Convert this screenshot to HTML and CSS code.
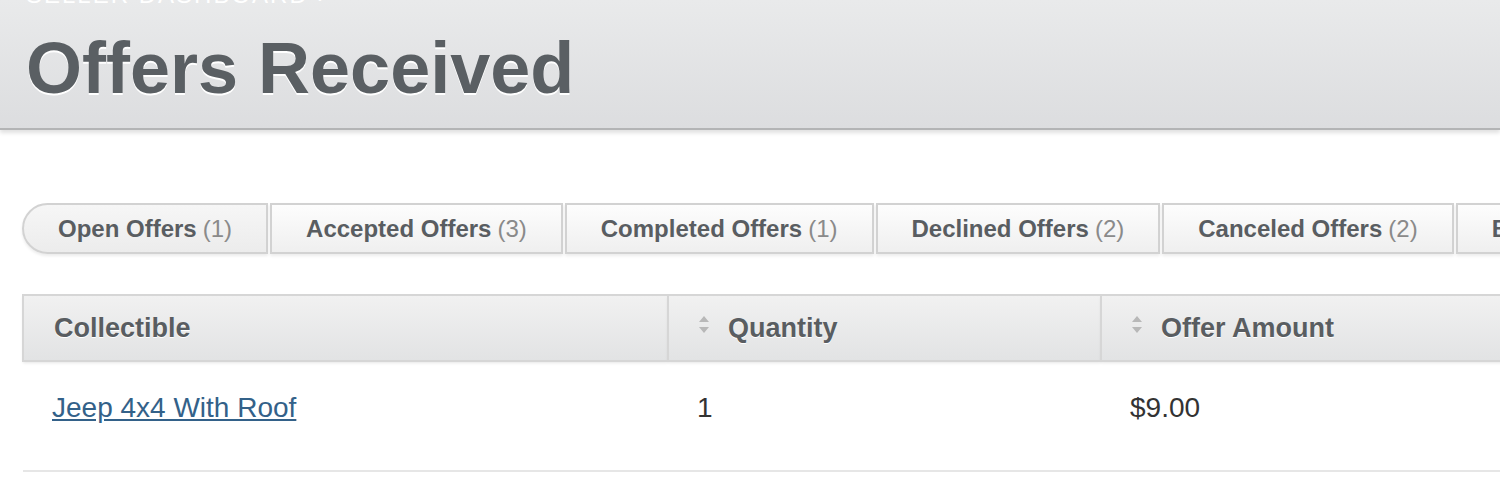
FILE: index.html
```html
<!DOCTYPE html>
<html lang="en">

<head>
    <meta charset="UTF-8">
    <meta name="viewport" content="width=device-width, initial-scale=1.0">
    <title>Offers Received</title>

    <link rel="stylesheet" href="styles.css">
</head>

<body>

    <div class="page-head">
        <p class="crumb">SELLER DASHBOARD &rsaquo;</p>
        <h1 class="title">Offers Received</h1>
    </div>

    <div class="content">
        <ul class="tabs">
            <li class="tab active">Open Offers <span class="count">(1)</span></li>
            <li class="tab">Accepted Offers <span class="count">(3)</span></li>
            <li class="tab">Completed Offers <span class="count">(1)</span></li>
            <li class="tab">Declined Offers <span class="count">(2)</span></li>
            <li class="tab">Canceled Offers <span class="count">(2)</span></li>
            <li class="tab">Blocked Offers <span class="count">(0)</span></li>
        </ul>

        <table class="offers">
            <thead>
                <tr>
                    <th class="col-item">Collectible</th>
                    <th class="col-qty">
                        <svg class="sort" width="12" height="20" viewBox="0 0 12 20"><path d="M6 1 L11 7 L1 7 Z M1 12 L11 12 L6 18 Z" fill="#b8b8b8"/></svg>Quantity
                    </th>
                    <th class="col-amount">
                        <svg class="sort" width="12" height="20" viewBox="0 0 12 20"><path d="M6 1 L11 7 L1 7 Z M1 12 L11 12 L6 18 Z" fill="#b8b8b8"/></svg>Offer Amount
                    </th>
                </tr>
            </thead>
            <tbody>
                <tr>
                    <td><a href="#">Jeep 4x4 With Roof</a></td>
                    <td>1</td>
                    <td>$9.00</td>
                </tr>
            </tbody>
        </table>
    </div>

</body>

</html>
```

FILE: styles.css
```css
* {
    margin: 0;
    padding: 0;
    box-sizing: border-box;
    font-family: 'Liberation Sans', Arial, sans-serif;
}

body {
    background: #fff;
    width: 1500px;
    height: 481px;
    overflow: hidden;
}

.page-head {
    display: flow-root;
    height: 130px;
    padding: 0 26px;
    background: linear-gradient(#e9eaeb, #dcdddf);
    border-bottom: 2px solid #b3b4b5;
    box-shadow: 0 3px 4px rgba(0, 0, 0, 0.12);
}

.crumb {
    color: #fff;
    font-size: 24px;
    letter-spacing: 2px;
    line-height: 24px;
    margin-top: -17px;
    height: 24px;
}

.title {
    color: #5a5f63;
    font-size: 72px;
    font-weight: 700;
    line-height: 80px;
    margin-top: 21px;
    text-shadow: 0 2px 0 #fff;
}

.content {
    padding: 73px 0 0 22px;
    width: 1800px;
}

.tabs {
    list-style: none;
    display: flex;
    gap: 2px;
}

.tab {
    height: 51px;
    padding: 0 34px;
    display: flex;
    align-items: center;
    font-size: 24px;
    font-weight: 700;
    color: #595d61;
    background: linear-gradient(#fdfdfd, #efefef);
    border: 2px solid #d2d2d2;
    box-shadow: 0 2px 3px rgba(0, 0, 0, 0.08);
}

.tab.active {
    border-radius: 26px 0 0 26px;
    background: linear-gradient(#f6f6f6, #ececec);
}

.count {
    font-weight: 400;
    color: #8a8a8a;
    margin-left: 6px;
}

.offers {
    margin-top: 40px;
    width: 1700px;
    border-collapse: collapse;
}

.offers th {
    height: 66px;
    text-align: left;
    font-size: 27px;
    font-weight: 700;
    color: #595d61;
    background: linear-gradient(#f1f1f1, #e2e3e4);
    border: 2px solid #d6d6d6;
    text-shadow: 0 1px 0 #fff;
    box-shadow: 0 2px 3px rgba(0, 0, 0, 0.1);
}

.col-item {
    width: 645px;
    padding-left: 30px;
}

.col-qty {
    width: 433px;
    padding-left: 29px;
}

.col-amount {
    padding-left: 29px;
}

.sort {
    margin-right: 18px;
    vertical-align: 2px;
}

.offers td {
    height: 110px;
    font-size: 28px;
    color: #333;
    padding: 0 0 16px 29px;
    border-bottom: 2px solid #e6e6e6;
}

.offers a {
    color: #336189;
    text-decoration: underline;
}
```
